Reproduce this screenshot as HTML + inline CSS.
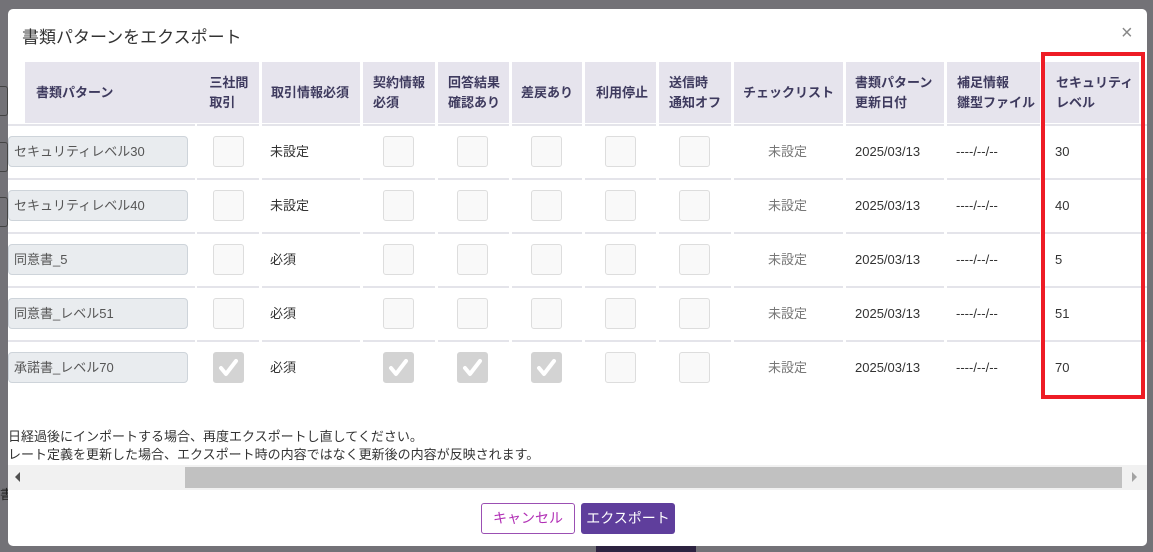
<!DOCTYPE html>
<html><head><meta charset="utf-8"><style>
*{box-sizing:border-box;margin:0;padding:0}
body{width:1153px;height:552px;overflow:hidden;background:#737277;font-family:"Liberation Sans","Noto Sans CJK JP",sans-serif;position:relative}
.a{position:absolute}
#modal{left:8px;top:9px;width:1139px;height:537px;background:#fff;border-radius:5px;overflow:hidden}
.h{background:#e6e4ed;color:#3e3a5e;font-weight:bold;font-size:13px;line-height:20px;display:flex;align-items:center}
.sep{height:2px;background:#e4e4ea}
.inp{background:#e9ecef;border:1px solid #ced4da;border-radius:4px;height:31px;font-size:13px;color:#555;line-height:29px;padding-left:5px}
.cb{width:31px;height:31px;border:1px solid #ddd;border-radius:3px;background:#f9f9f9}
.ck{background:#d3d3d3;border-color:#d3d3d3}
.t{font-size:13px;color:#333;line-height:16px}
</style></head><body>
<div class="a" style="left:0;top:86px;width:8px;height:30px;border:1px solid #444;border-left:none;border-radius:0 3px 3px 0"></div>
<div class="a" style="left:0;top:142px;width:8px;height:30px;border:1px solid #444;border-left:none;border-radius:0 3px 3px 0"></div>
<div class="a" style="left:0;top:197px;width:8px;height:30px;border:1px solid #444;border-left:none;border-radius:0 3px 3px 0"></div>
<div class="a" style="left:0;top:484px;font-size:13px;color:#222">書</div>
<div class="a" style="left:596px;top:546px;width:100px;height:6px;background:#2d2340"></div>
<div id="modal" class="a">
<div class="a" style="left:14px;top:14px;font-size:17px;color:#333">書類パターンをエクスポート</div>
<div class="a" style="left:1113px;top:13px;font-size:20px;color:#888">×</div>
</div>
<div id="tbl"></div>
<script>
let h='';
const hdr=[[25,259,'<span style="margin-left:11px">書類パターン</span><span style="margin-left:96px">三社間<br>取引</span>'],[262,360,'<span style="margin-left:9px">取引情報必須</span>'],[363,435,'<span style="margin-left:10px">契約情報<br>必須</span>'],[438,509,'<span style="margin-left:10px">回答結果<br>確認あり</span>'],[512,582,'<span style="margin-left:9px">差戻あり</span>'],[585,656,'<span style="margin-left:11px">利用停止</span>'],[659,731,'<span style="margin-left:10px">送信時<br>通知オフ</span>'],[734,843,'<span style="margin-left:9px">チェックリスト</span>'],[846,944,'<span style="margin-left:9px">書類パターン<br>更新日付</span>'],[947,1040,'<span style="margin-left:10px">補足情報<br>雛型ファイル</span>'],[1043,1139,'<span style="margin-left:13px">セキュリティ<br>レベル</span>']];
hdr.forEach(c=>{h+=`<div class="a h" style="left:${c[0]}px;top:62px;width:${c[1]-c[0]}px;height:61px">${c[2]}</div>`});
const rows=[["セキュリティレベル30","未設定",0,"30"],["セキュリティレベル40","未設定",0,"40"],["同意書_5","必須",0,"5"],["同意書_レベル51","必須",0,"51"],["承諾書_レベル70","必須",1,"70"]];
const sepc=[[8,195],[197,259],[262,360],[363,435],[438,509],[512,582],[585,656],[659,731],[734,843],[846,944],[947,1040],[1043,1147]];
rows.forEach((r,i)=>{
 const y=124+i*54;
 sepc.forEach(c=>{h+=`<div class="a sep" style="left:${c[0]}px;top:${y}px;width:${c[1]-c[0]}px"></div>`});
 const cy=y+12;
 h+=`<div class="a inp" style="left:8px;top:${cy}px;width:180px">${r[0]}</div>`;
 [213,383,457,531,605,679].forEach((x,j)=>{const c=r[2]&&[1,1,1,1,0,0][j];
  h+=`<div class="a cb ${c?'ck':''}" style="left:${x}px;top:${cy}px">${c?'<svg width="29" height="29" viewBox="0 0 29 29"><path d="M7 15 L12 21 L22 8" stroke="#fff" stroke-width="4" fill="none" stroke-linecap="round" stroke-linejoin="round"/></svg>':''}</div>`});
 const ty=y+20;
 h+=`<div class="a t" style="left:270px;top:${ty}px">${r[1]}</div>`;
 h+=`<div class="a t" style="left:768px;top:${ty}px;color:#777">未設定</div>`;
 h+=`<div class="a t" style="left:855px;top:${ty}px">2025/03/13</div>`;
 h+=`<div class="a t" style="left:956px;top:${ty}px">----/--/--</div>`;
 h+=`<div class="a t" style="left:1055px;top:${ty}px">${r[3]}</div>`;
});
h+=`<div class="a t" style="left:8px;top:429px">日経過後にインポートする場合、再度エクスポートし直してください。</div>`;
h+=`<div class="a t" style="left:8px;top:447px">レート定義を更新した場合、エクスポート時の内容ではなく更新後の内容が反映されます。</div>`;
h+=`<div class="a" style="left:8px;top:465px;width:1139px;height:25px;background:#f1f1f1"></div>`;
h+=`<div class="a" style="left:185px;top:467px;width:937px;height:21px;background:#c1c1c1"></div>`;
h+=`<div class="a" style="left:15px;top:472px;width:0;height:0;border-top:5px solid transparent;border-bottom:5px solid transparent;border-right:5px solid #505050"></div>`;
h+=`<div class="a" style="left:1132px;top:472px;width:0;height:0;border-top:5px solid transparent;border-bottom:5px solid transparent;border-left:5px solid #a3a3a3"></div>`;
h+=`<div class="a" style="left:481px;top:503px;width:94px;height:31px;border:1px solid #9b4fb3;border-radius:3px;color:#b12fb5;font-size:14px;line-height:29px;text-align:center">キャンセル</div>`;
h+=`<div class="a" style="left:581px;top:503px;width:94px;height:31px;background:#5f3e9c;border-radius:3px;color:#fff;font-size:14px;line-height:31px;text-align:center">エクスポート</div>`;
h+=`<div class="a" style="left:1041px;top:52px;width:104px;height:347px;border:4px solid #ee1c25"></div>`;
document.getElementById('tbl').innerHTML=h;
</script>
</body></html>
